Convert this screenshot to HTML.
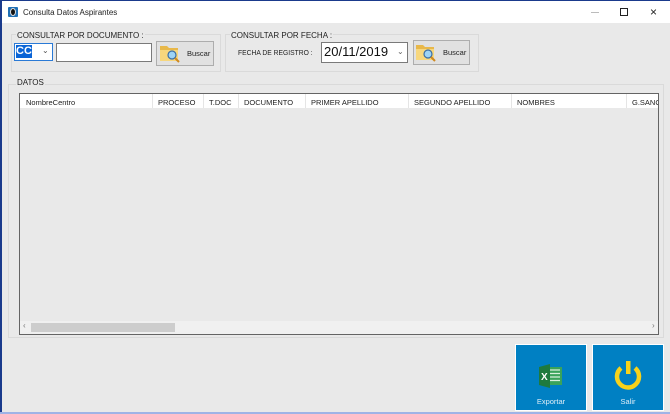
<!DOCTYPE html>
<html><head><meta charset="utf-8"><style>
*{margin:0;padding:0;box-sizing:border-box}
body{width:670px;height:414px;overflow:hidden;background:#e9e9e9;font-family:"Liberation Sans",sans-serif;position:relative}
.a{position:absolute}
.t{font-size:8px;color:#222;white-space:nowrap}
.grp{border:1px solid #dadada;}
.btn{background:#e1e1e1;border:1px solid #adadad}
.hdr{font-size:7.5px;color:#222;top:4px;white-space:nowrap}
.sep{top:0;width:1px;height:14px;background:#e5e5e5}
</style></head><body>
<div class="a" style="left:0;top:0;width:2px;height:414px;background:#1a3a8c"></div>
<div class="a" style="left:0;top:0;width:670px;height:1px;background:#1a3a8c"></div>
<div class="a" style="left:0;top:412px;width:670px;height:2px;background:#9fb3e6"></div>
<div class="a" style="left:2px;top:1px;width:668px;height:22px;background:#fff"></div>
<div class="a" style="left:8px;top:7px;width:10px;height:10px;background:#1f6fb5;border-radius:1px"></div>
<div class="a" style="left:10px;top:8px;width:6px;height:8px;background:#111;border-radius:50%;border:1px solid #ddd"></div>
<div class="a t" style="left:23px;top:8px;font-size:8px">Consulta Datos Aspirantes</div>
<div class="a" style="left:591px;top:12px;width:8px;height:1px;background:#bbb"></div>
<div class="a" style="left:620px;top:8px;width:8px;height:8px;border:1px solid #222"></div>
<div class="a" style="left:650px;top:5px;font-size:12px;color:#222">×</div>

<div class="a grp" style="left:11px;top:34px;width:210px;height:38px"></div>
<div class="a t" style="left:16px;top:31px;background:#e9e9e9;padding:0 1px">CONSULTAR POR DOCUMENTO :</div>
<div class="a" style="left:14px;top:43px;width:39px;height:18px;background:#fff;border:1px solid #2a7ad6"></div>
<div class="a" style="left:16px;top:45px;width:16px;height:13px;background:#0a64d6;color:#fff;font-size:11px;font-weight:bold;line-height:13px">CC</div>
<div class="a" style="left:42px;top:46px;font-size:8px;color:#555">⌄</div>
<div class="a" style="left:56px;top:43px;width:96px;height:19px;background:#fff;border:1px solid #7a7a7a"></div>
<div class="a btn" style="left:156px;top:41px;width:58px;height:25px"></div>
<svg class="a" style="left:159px;top:43px" width="22" height="20"><path d="M1 3h7l2 2h9v12H1z" fill="#e8b84a"/><path d="M1 7h18v11H1z" fill="#f7d77d"/><circle cx="13" cy="12" r="4" fill="#9dd3f5" stroke="#3a6ea5" stroke-width="1.2"/><path d="M16 15l4 4" stroke="#d08a20" stroke-width="2"/></svg>
<div class="a t" style="left:187px;top:49px;font-size:7.5px">Buscar</div>

<div class="a grp" style="left:225px;top:34px;width:254px;height:38px"></div>
<div class="a t" style="left:230px;top:31px;background:#e9e9e9;padding:0 1px">CONSULTAR POR FECHA :</div>
<div class="a t" style="left:238px;top:48px;font-size:7.5px;transform:scaleX(0.9);transform-origin:0 0">FECHA DE REGISTRO :</div>
<div class="a" style="left:321px;top:42px;width:87px;height:21px;background:#fff;border:1px solid #7a7a7a"></div>
<div class="a" style="left:324px;top:44px;font-size:13px;color:#111">20/11/2019</div>
<div class="a" style="left:397px;top:47px;font-size:8px;color:#666">⌄</div>
<div class="a btn" style="left:413px;top:40px;width:57px;height:25px"></div>
<svg class="a" style="left:415px;top:42px" width="22" height="20"><path d="M1 3h7l2 2h9v12H1z" fill="#e8b84a"/><path d="M1 7h18v11H1z" fill="#f7d77d"/><circle cx="13" cy="12" r="4" fill="#9dd3f5" stroke="#3a6ea5" stroke-width="1.2"/><path d="M16 15l4 4" stroke="#d08a20" stroke-width="2"/></svg>
<div class="a t" style="left:443px;top:48px;font-size:7.5px">Buscar</div>

<div class="a grp" style="left:8px;top:84px;width:656px;height:254px"></div>
<div class="a t" style="left:16px;top:78px;background:#e9e9e9;padding:0 1px">DATOS</div>
<div class="a" style="left:19px;top:93px;width:640px;height:242px;border:1px solid #646464;background:#e9e9e9;overflow:hidden">
 <div class="a" style="left:0;top:0;width:640px;height:14px;background:#fff">
  <span class="a hdr" style="left:6px">NombreCentro</span>
  <div class="a sep" style="left:132px"></div><span class="a hdr" style="left:138px">PROCESO</span>
  <div class="a sep" style="left:183px"></div><span class="a hdr" style="left:189px">T.DOC</span>
  <div class="a sep" style="left:218px"></div><span class="a hdr" style="left:224px">DOCUMENTO</span>
  <div class="a sep" style="left:285px"></div><span class="a hdr" style="left:291px">PRIMER APELLIDO</span>
  <div class="a sep" style="left:388px"></div><span class="a hdr" style="left:394px">SEGUNDO APELLIDO</span>
  <div class="a sep" style="left:491px"></div><span class="a hdr" style="left:497px">NOMBRES</span>
  <div class="a sep" style="left:606px"></div><span class="a hdr" style="left:612px">G.SANG</span>
 </div>
 <div class="a" style="left:0;top:227px;width:640px;height:13px;background:#f0f0f0"></div>
 <div class="a" style="left:11px;top:229px;width:144px;height:9px;background:#cdcdcd"></div>
 <div class="a" style="left:3px;top:227px;font-size:8px;color:#777">‹</div>
 <div class="a" style="left:632px;top:227px;font-size:8px;color:#777">›</div>
</div>

<div class="a" style="left:515px;top:344px;width:72px;height:67px;background:#0080c3;border:1px solid #fff"></div>
<svg class="a" style="left:538px;top:363px" width="26" height="26"><rect x="9" y="4" width="15" height="18" fill="#3aa35a"/><path d="M12 7h10M12 10.5h10M12 14h10M12 17.5h10" stroke="#d8f0dc" stroke-width="1.3"/><path d="M1 4l11-3v24l-11-3z" fill="#1e7a3e"/><text x="3" y="17" font-size="10" font-weight="bold" fill="#fff" font-family="Liberation Sans">X</text></svg>
<div class="a" style="left:515px;top:397px;width:72px;text-align:center;font-size:7.5px;color:#e0eef8">Exportar</div>
<div class="a" style="left:592px;top:344px;width:72px;height:67px;background:#0080c3;border:1px solid #fff"></div>
<svg class="a" style="left:612px;top:359px" width="32" height="32"><path d="M9 9A11 11 0 1 0 23 9" fill="none" stroke="#f7d21a" stroke-width="4.5"/><rect x="14" y="2" width="4.5" height="13" fill="#f7d21a"/></svg>
<div class="a" style="left:592px;top:397px;width:72px;text-align:center;font-size:7.5px;color:#e0eef8">Salir</div>
</body></html>
